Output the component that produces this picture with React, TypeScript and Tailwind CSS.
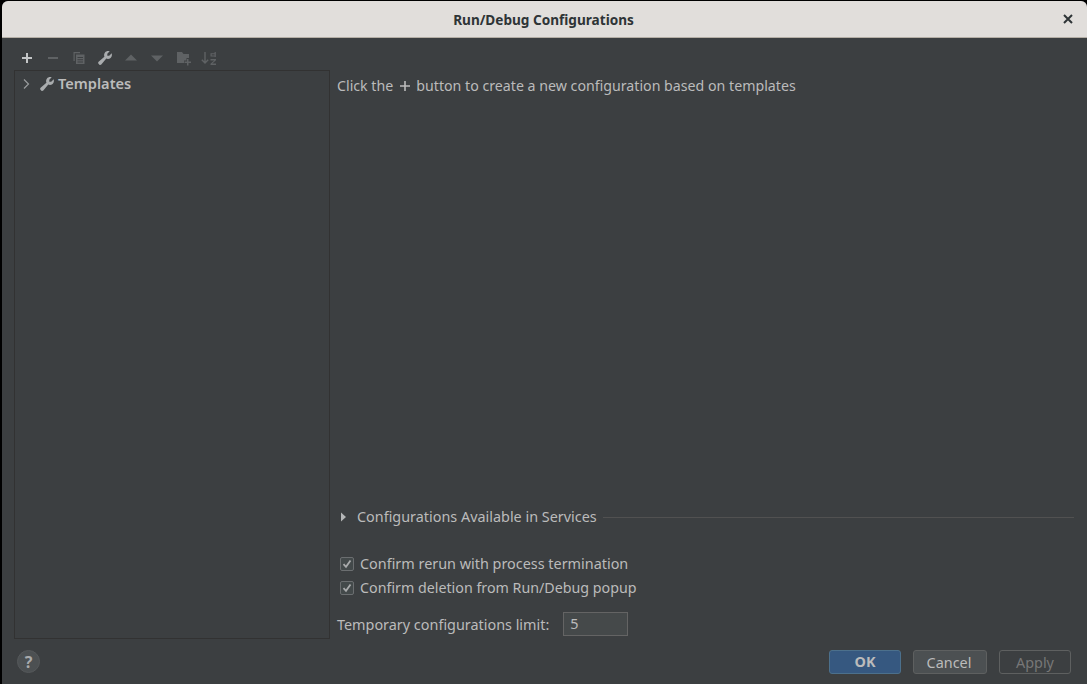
const font = { fontFamily: '"Noto Sans", "Open Sans", sans-serif' };

function Wrench({ className }: { className: string }) {
  return (
    <svg viewBox="0 0 14 14" className={className} fill="currentColor">
      <path d="M13.700 2.300 11.200 4.700 9.300 4.700 9.300 2.800 11.700.3C9.800-.3 8 .2 7 1.500 6 2.700 5.800 4.300 6.400 5.700L.6 10.700C.1 11.200 0 11.900.3 12.500L1.400 13.700C2 14.100 2.800 14 3.300 13.500L8.300 7.600C9.700 8.200 11.400 8 12.600 6.900 13.800 5.800 14.200 4 13.700 2.300Z" />
    </svg>
  );
}

function Toolbar() {
  return (
    <div className="flex h-[32px] items-center pl-[17px] pt-[8px] text-[#5f6264]">
      <svg viewBox="0 0 16 16" className="mr-[10px] h-4 w-4 text-[#c4c6c7]" fill="currentColor"><path d="M7 3h2v4h4v2H9v4H7V9H3V7h4z" /></svg>
      <svg viewBox="0 0 16 16" className="mr-[10px] h-4 w-4" fill="currentColor"><path d="M3 7h10v2H3z" /></svg>
      <svg viewBox="0 0 16 16" className="mr-[10px] h-4 w-4" fill="currentColor"><path d="M2.500 2h6.500v1.200H3.700v7.800H2.500zM5 4.500h8.500v9.500H5zM6.500 7v1h5.500V7zm0 2.200v1h5.500v-1zm0 2.200v1h5.500v-1z" fillRule="evenodd" /></svg>
      <div className="mr-[10px] flex h-4 w-4 items-center justify-center text-[#a9acae]"><Wrench className="h-[14px] w-[14px]" /></div>
      <svg viewBox="0 0 16 16" className="mr-[10px] h-4 w-4" fill="currentColor"><path d="M8 4.500 14 10.500H2z" /></svg>
      <svg viewBox="0 0 16 16" className="mr-[11px] h-4 w-4" fill="currentColor"><path d="M8 11.500 2 5.500h12z" /></svg>
      <svg viewBox="0 0 16 16" className="mr-[9px] h-4 w-4" fill="currentColor"><path d="M1 2h5l1.500 2H13v4h-2.500v2.500H8V13H1zM11 9h1.500v2.500H15V13h-2.500v2.500H11V13H8.500v-1.500H11z" /></svg>
      <svg viewBox="0 0 16 16" className="h-4 w-4" fill="currentColor" fillRule="evenodd"><path d="M3.300 2h1.400v9.200l2-2 1 1L4 14 .3 10.200l1-1 2 2zM9.500 2H14.800V7H13.600V6.500H9.500V3.200H13.600V2ZM10.700 4.200V5.400H13.600V4.200zM9.500 9h5.500v1.300l-3.700 3.300H15V15H9.500v-1.300l3.700-3.300H9.500z" /></svg>
    </div>
  );
}

function Check({ label, size }: { label: string; size: string }) {
  return (
    <div className="flex h-[24px] items-center pl-[3px]">
      <div className="flex h-[14px] w-[14px] items-center justify-center rounded-[2px] border border-[#6b6e70] bg-[#43494a]">
        <svg viewBox="0 0 12 12" className="h-[12px] w-[12px]" fill="none" stroke="#a9abac" strokeWidth="1.800"><path d="M2.500 6.200 5 8.800 9.500 2.500" /></svg>
      </div>
      <span className={`ml-[6px] text-[#bbbbbb] ${size}`}>{label}</span>
    </div>
  );
}

export default function App() {
  return (
    <div className="h-[684px] w-[1087px] overflow-hidden bg-black pl-[2px] pt-[1px]" style={font}>
      <div className="flex h-[683px] flex-col overflow-hidden rounded-t-[6px] bg-[#3c3f41]">
        <div className="relative flex h-[37px] shrink-0 items-center justify-center border-b border-[#b5afa6] bg-[#e1dedb] pr-[2px] pt-[2px]">
          <span className="text-[13.6px] font-bold text-[#2e3436]">Run/Debug Configurations</span>
          <svg viewBox="0 0 16 16" className="absolute right-[11px] top-[10px] h-4 w-4" fill="none" stroke="#2e3436" strokeWidth="2"><path d="M4 4l8 8M12 4l-8 8" /></svg>
        </div>
        <div className="flex min-h-0 flex-1 flex-col">
          <div className="flex min-h-0 flex-1">
            <div className="flex w-[328px] shrink-0 flex-col">
              <Toolbar />
              <div className="ml-[12px] w-[316px] flex-1 border border-[#323232]">
                <div className="flex h-[25px] items-center pl-[3px]">
                  <svg viewBox="0 0 16 16" className="h-4 w-4 text-[#9a9c9e]" fill="none" stroke="currentColor" strokeWidth="1.200"><path d="M6 3.500 10.500 8 6 12.500" /></svg>
                  <Wrench className="ml-[6px] h-[14px] w-[14px] text-[#a9acae]" />
                  <span className="ml-[4px] text-[14.6px] font-semibold text-[#bbbbbb]">Templates</span>
                </div>
              </div>
            </div>
            <div className="flex min-w-0 flex-1 flex-col pl-[7px] pr-[13px]">
              <div className="flex h-[60px] shrink-0 items-end text-[#bbbbbb]">
                <div className="flex h-[24px] items-center">
                  <span className="text-[14.2px]">Click the</span>
                  <svg viewBox="0 0 16 16" className="ml-[4px] mr-[3px] h-4 w-4 text-[#bbbbbb]" fill="currentColor"><path d="M7.200 3h1.600v4.200H13v1.600H8.800V13H7.200V8.800H3V7.200h4.200z" /></svg>
                  <span className="text-[14.2px]">button to create a new configuration based on templates</span>
                </div>
              </div>
              <div className="flex-1" />
              <div className="flex h-[24px] shrink-0 items-center pl-[3px]">
                <svg viewBox="0 0 8 10" className="h-[10px] w-[8px] text-[#b4b6b7]" fill="currentColor"><path d="M1 0.500 6 5 1 9.500z" /></svg>
                <span className="ml-[9px] text-[14.4px] text-[#bbbbbb]">Configurations Available in Services</span>
                <div className="ml-[6px] h-px flex-1 bg-[#515151]" />
              </div>
              <div className="mt-[23px] flex shrink-0 flex-col">
                <Check label="Confirm rerun with process termination" size="text-[14.4px]" />
                <Check label="Confirm deletion from Run/Debug popup" size="text-[14.25px]" />
              </div>
              <div className="mb-[3px] mt-[12px] flex h-[24px] shrink-0 items-center">
                <span className="pt-[2px] text-[14.4px] text-[#bbbbbb]">Temporary configurations limit:</span>
                <div className="ml-[14px] flex h-[24px] w-[65px] items-center border border-[#646464] bg-[#45494a] pl-[6px] text-[14.4px] text-[#bbbbbb]">5</div>
              </div>
            </div>
          </div>
          <div className="flex h-[45px] shrink-0 items-center pl-[15px] pr-[16px]">
            <div className="flex h-[23px] w-[23px] items-center justify-center rounded-full border border-[#55585a] bg-[#4c5052] text-[16px] font-bold text-[#a9abac]">?</div>
            <div className="flex-1" />
            <div className="flex h-[24px] w-[72px] items-center justify-center rounded-[3px] border border-[#4c708c] bg-[#365880] text-[14.4px] font-bold text-[#bbbbbb]">OK</div>
            <div className="ml-[12px] flex h-[24px] w-[74px] items-center justify-center rounded-[3px] border border-[#5e6060] bg-[#4c5052] pr-[2px] pt-[2px] text-[14.4px] text-[#bbbbbb]">Cancel</div>
            <div className="ml-[12px] flex h-[24px] w-[72px] items-center justify-center rounded-[3px] border border-[#5e6060] pt-[2px] text-[14.4px] text-[#777777]">Apply</div>
          </div>
        </div>
      </div>
    </div>
  );
}
